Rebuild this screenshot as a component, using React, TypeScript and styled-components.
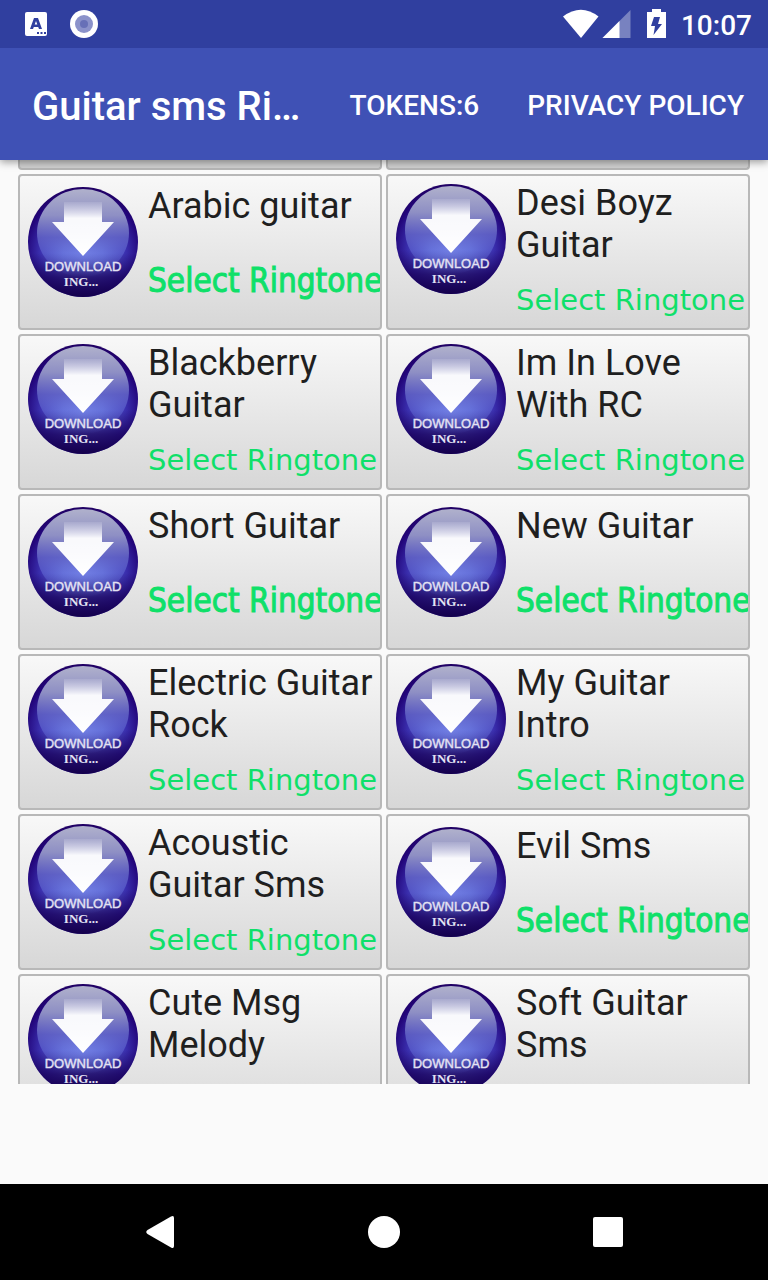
import React from "react";
import styled, { createGlobalStyle } from "styled-components";

const GlobalStyle = createGlobalStyle`
  * { box-sizing: border-box; }
  body { margin: 0; background: #fafafa; font-family: Roboto, sans-serif; }
  button { font-family: inherit; border: 0; padding: 0; background: none; cursor: pointer; }
`;

const Screen = styled.div`
  display: flex;
  flex-direction: column;
  height: 100vh;
  min-width: 0;
`;

const StatusBar = styled.div`
  position: relative;
  z-index: 2;
  display: flex;
  flex: none;
  align-items: center;
  justify-content: space-between;
  height: 48px;
  padding: 0 16px 0 24px;
  background: #303f9f;
  color: #fff;
`;

const StatusGroup = styled.div<{ $gap: number }>`
  display: flex;
  align-items: center;
  gap: ${(p) => p.$gap}px;
`;

const Clock = styled.time`
  font-size: 28px;
  font-weight: 500;
  line-height: 32px;
  padding-top: 4px;
`;

const AppBar = styled.header`
  position: relative;
  z-index: 1;
  display: flex;
  flex: none;
  align-items: center;
  height: 112px;
  padding-left: 32px;
  background: #3f51b5;
  color: #fff;
  box-shadow: 0 2px 8px rgba(0, 0, 0, 0.4);
`;

const AppTitle = styled.h1`
  flex: 1;
  min-width: 0;
  margin: 0 16px 0 0;
  padding-top: 6px;
  overflow: hidden;
  text-overflow: ellipsis;
  white-space: nowrap;
  font-size: 40px;
  font-weight: 500;
  line-height: 48px;
`;

const MenuAction = styled.button`
  flex: none;
  height: 96px;
  padding: 4px 24px 0;
  color: #fff;
  font-size: 28px;
  font-weight: 500;
  line-height: 32px;
  white-space: nowrap;
`;

const ListViewport = styled.main`
  flex: 1;
  min-height: 0;
  overflow: hidden;
  padding: 0 18px;
`;

const CardGrid = styled.div`
  display: grid;
  grid-template-columns: 1fr 1fr;
  gap: 4px;
`;

const ScrolledCard = styled.div`
  height: 10px;
  border: 2px solid #b6b6b6;
  border-top: 0;
  border-radius: 0 0 4px 4px;
  background: #d0d0d0;
`;

const Card = styled.button<{ $oneLine: boolean }>`
  display: flex;
  align-items: flex-start;
  gap: 10px;
  height: 156px;
  min-width: 0;
  padding: ${(p) => (p.$oneLine ? 11 : 8)}px 0 0 8px;
  overflow: hidden;
  border: 2px solid #b8b8b8;
  border-radius: 4px;
  background: linear-gradient(#f8f8f8, #d7d7d7);
  text-align: left;
`;

const Labels = styled.span`
  display: flex;
  flex: 1;
  flex-direction: column;
  min-width: 0;
  margin-top: -2px;
`;

const RingtoneName = styled.span`
  color: #1f1f1f;
  font-size: 36px;
  line-height: 42px;
`;

const SelectLabel = styled.span<{ $large: boolean }>`
  color: #0fe069;
  font-family: ${(p) => (p.$large ? '"DejaVu Sans Condensed"' : '"DejaVu Sans"')}, sans-serif;
  font-size: ${(p) => (p.$large ? 33 : 29)}px;
  line-height: ${(p) => (p.$large ? 48 : 32)}px;
  margin-top: ${(p) => (p.$large ? 30 : 18)}px;
  -webkit-text-stroke: ${(p) => (p.$large ? "1px #0fe069" : "0")};
  white-space: nowrap;
`;

const ListFooter = styled.div`
  flex: none;
  height: 100px;
`;

const NavBar = styled.nav`
  display: flex;
  flex: none;
  align-items: center;
  justify-content: center;
  gap: 128px;
  height: 96px;
  background: #000;
`;

const NavButton = styled.button`
  display: flex;
  align-items: center;
  justify-content: center;
  width: 96px;
  height: 96px;
`;

const BallSvg = styled.svg`
  flex: none;
`;

function DownloadBall({ id }: { id: string }) {
  return (
    <BallSvg width="110" height="110" viewBox="0 0 110 110" aria-hidden="true">
      <defs>
        <radialGradient id={`${id}-base`} cx="0.5" cy="0.6" r="0.6">
          <stop offset="0" stopColor="#7c8cf0" />
          <stop offset="0.3" stopColor="#6470dc" />
          <stop offset="0.65" stopColor="#3a2fae" />
          <stop offset="0.88" stopColor="#22057a" />
          <stop offset="1" stopColor="#200062" />
        </radialGradient>
        <linearGradient id={`${id}-shade`} x1="0" y1="0" x2="0" y2="1">
          <stop offset="0.6" stopColor="#180058" stopOpacity="0" />
          <stop offset="0.82" stopColor="#180058" stopOpacity="0.75" />
          <stop offset="1" stopColor="#14004c" />
        </linearGradient>
        <linearGradient id={`${id}-gloss`} x1="0" y1="0" x2="0" y2="1">
          <stop offset="0" stopColor="#b0b1cc" />
          <stop offset="0.3" stopColor="#8e8fc4" />
          <stop offset="0.55" stopColor="#6264c6" stopOpacity="0.85" />
          <stop offset="0.8" stopColor="#6a78e0" stopOpacity="0.35" />
          <stop offset="1" stopColor="#6a78e0" stopOpacity="0" />
        </linearGradient>
        <linearGradient id={`${id}-arrow`} x1="0" y1="0" x2="0" y2="1">
          <stop offset="0" stopColor="#fff" stopOpacity="0.1" />
          <stop offset="0.3" stopColor="#fff" stopOpacity="0.95" />
          <stop offset="1" stopColor="#fff" />
        </linearGradient>
      </defs>
      <circle cx="55" cy="55" r="55" fill={`url(#${id}-base)`} />
      <circle cx="55" cy="55" r="55" fill={`url(#${id}-shade)`} />
      <ellipse cx="55" cy="46" rx="46" ry="44" fill={`url(#${id}-gloss)`} />
      <path d="M36 15H74V35H86L55 69L24 35H36Z" fill={`url(#${id}-arrow)`} />
      <text x="55" y="84" textAnchor="middle" fill="#e4e2f3" stroke="#e4e2f3" strokeWidth="0.4" fontSize="13" fontFamily='"Liberation Sans", sans-serif'>
        DOWNLOAD
      </text>
      <text x="53" y="99" textAnchor="middle" fill="#e4e2f3" fontSize="13" fontWeight="700" fontFamily='"Liberation Serif", serif'>
        ING...
      </text>
    </BallSvg>
  );
}

const ringtones: { name: string; oneLine?: boolean }[] = [
  { name: "Arabic guitar", oneLine: true },
  { name: "Desi Boyz Guitar" },
  { name: "Blackberry Guitar" },
  { name: "Im In Love With RC" },
  { name: "Short Guitar", oneLine: true },
  { name: "New Guitar", oneLine: true },
  { name: "Electric Guitar Rock" },
  { name: "My Guitar Intro" },
  { name: "Acoustic Guitar Sms" },
  { name: "Evil Sms", oneLine: true },
  { name: "Cute Msg Melody" },
  { name: "Soft Guitar Sms" },
];

function RingtoneCard({ name, oneLine = false, id }: { name: string; oneLine?: boolean; id: string }) {
  return (
    <Card type="button" $oneLine={oneLine}>
      <DownloadBall id={id} />
      <Labels>
        <RingtoneName>{name}</RingtoneName>
        <SelectLabel $large={oneLine}>Select Ringtone</SelectLabel>
      </Labels>
    </Card>
  );
}

export default function App() {
  return (
    <Screen>
      <GlobalStyle />
      <StatusBar>
        <StatusGroup $gap={22}>
          <svg width="24" height="24" viewBox="0 0 24 24" aria-hidden="true">
            <rect x="1" y="0" width="22" height="24" rx="2" fill="#fff" />
            <path fillRule="evenodd" fill="#303f9f" d="M10 6h4l4 11h-3l-.8-2H9.800l-.8 2H6zM12 9l-1.300 3.500h2.600z" />
            <path d="M13 20h2v2h-2zM16.500 20h2v2h-2zM20 20h2v2h-2z" fill="#303f9f" />
          </svg>
          <svg width="28" height="28" viewBox="0 0 28 28" aria-hidden="true">
            <circle cx="14" cy="14" r="14" fill="#fff" />
            <circle cx="14" cy="14" r="9" fill="#8b92ca" />
            <circle cx="14" cy="14" r="4" fill="#6770b7" />
          </svg>
        </StatusGroup>
        <StatusGroup $gap={14}>
          <svg width="104" height="30" viewBox="0 0 104 30" aria-hidden="true">
            <path d="M0 7.500Q18-6 35.500 7.500L18 29Z" fill="#fff" />
            <path d="M67.500 1V29H39.500Z" fill="#fff" fillOpacity="0.35" />
            <path d="M56.500 12V29H39.500Z" fill="#fff" />
            <path d="M89 0h9v3h5v26H84V3h5z" fill="#fff" />
            <path d="M91 8h6l-2 7h4l-8.500 11 1.500-9h-4z" fill="#303f9f" />
          </svg>
          <Clock>10:07</Clock>
        </StatusGroup>
      </StatusBar>
      <AppBar>
        <AppTitle>Guitar sms Ringtones</AppTitle>
        <MenuAction type="button">TOKENS:6</MenuAction>
        <MenuAction type="button">PRIVACY POLICY</MenuAction>
      </AppBar>
      <ListViewport>
        <CardGrid>
          <ScrolledCard />
          <ScrolledCard />
          {ringtones.map((r, i) => (
            <RingtoneCard key={r.name} id={`ball${i}`} {...r} />
          ))}
        </CardGrid>
      </ListViewport>
      <ListFooter />
      <NavBar>
        <NavButton type="button" aria-label="Back">
          <svg width="28" height="32" viewBox="0 0 28 32">
            <path d="M25 .5Q28-1 28 2V30Q28 33 25 31.500L1.500 18Q-1 16 1.500 14Z" fill="#fff" />
          </svg>
        </NavButton>
        <NavButton type="button" aria-label="Home">
          <svg width="32" height="32" viewBox="0 0 32 32">
            <circle cx="16" cy="16" r="16" fill="#fff" />
          </svg>
        </NavButton>
        <NavButton type="button" aria-label="Recent apps">
          <svg width="30" height="30" viewBox="0 0 30 30">
            <rect width="30" height="30" rx="2" fill="#fff" />
          </svg>
        </NavButton>
      </NavBar>
    </Screen>
  );
}
